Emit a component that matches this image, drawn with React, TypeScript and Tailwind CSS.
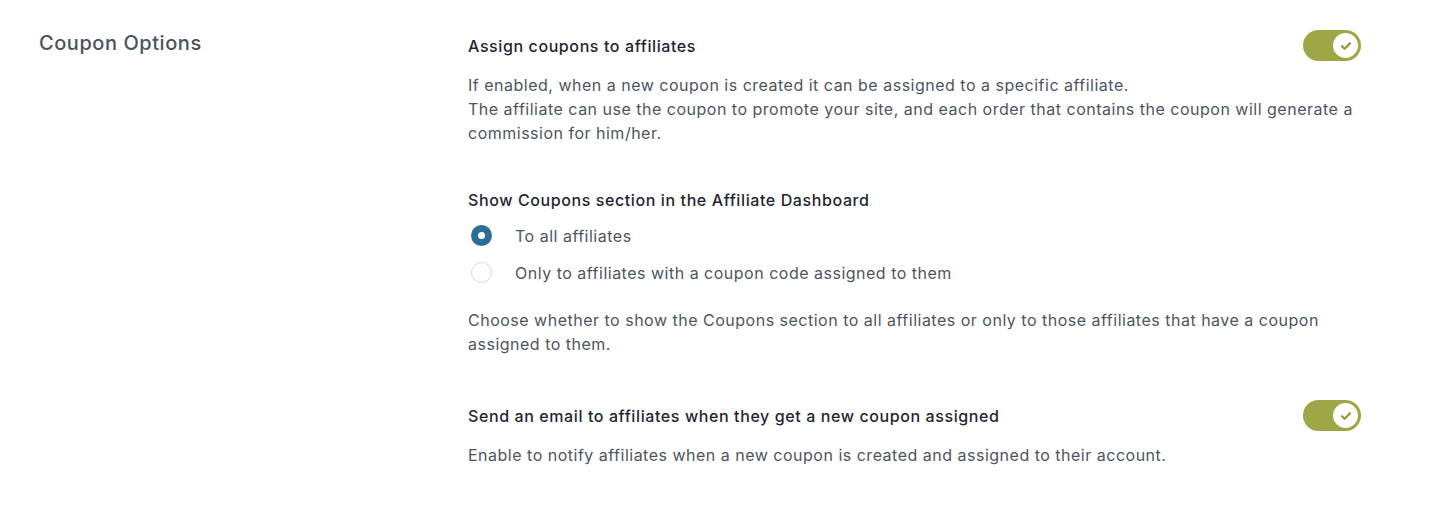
const Toggle = () => (
  <div className="flex h-[31px] w-[58px] shrink-0 items-center justify-end rounded-full bg-[#9ea646] pr-[3px]">
    <div className="flex h-[25px] w-[25px] items-center justify-center rounded-full bg-white">
      <svg width="12" height="10" viewBox="0 0 12 10" fill="none">
        <path d="M2 5.2l2.6 2.6L10 2.4" stroke="#8f9740" strokeWidth="2.2" strokeLinecap="round" strokeLinejoin="round" />
      </svg>
    </div>
  </div>
);

const Radio = ({ checked, label }: any) => (
  <div className="flex h-[37px] items-center">
    <div className="flex w-[47px] shrink-0 items-center pl-[3px]">
      {checked ? (
        <div className="flex h-[21px] w-[21px] items-center justify-center rounded-full bg-[#2e6e96]">
          <div className="h-[7px] w-[7px] rounded-full bg-white" />
        </div>
      ) : (
        <div className="h-[21px] w-[21px] rounded-full border border-[#d4d7dc] bg-white" />
      )}
    </div>
    <span className="text-[16px] tracking-[0.5px] text-[#4d5560]">{label}</span>
  </div>
);

export default function App() {
  return (
    <div className="min-h-[508px] w-[1452px] bg-white font-['Inter','Liberation_Sans',sans-serif] antialiased">
      <div className="flex pl-[39px] pt-[30px]">
        <div className="w-[429px] shrink-0">
          <h2 className="text-[20px] font-medium leading-[26px] tracking-[0.55px] text-[#4a5260]">Coupon Options</h2>
        </div>
        <div className="w-[893px]">
          <div className="flex items-center justify-between">
            <span className="text-[16px] font-medium leading-[24px] tracking-[0.6px] text-[#1f2530]">Assign coupons to affiliates</span>
            <Toggle />
          </div>
          <p className="mt-[12px] text-[16px] leading-[24px] tracking-[0.5px] text-[#4d5560]">
            If enabled, when a new coupon is created it can be assigned to a specific affiliate.
            <br />
            The affiliate can use the coupon to promote your site, and each order that contains the coupon will generate a commission for him/her.
          </p>

          <div className="mt-[43px] text-[16px] font-medium leading-[24px] tracking-[0.6px] text-[#1f2530]">
            Show Coupons section in the Affiliate Dashboard
          </div>
          <div className="mt-[5px]">
            <Radio checked label="To all affiliates" />
            <Radio label="Only to affiliates with a coupon code assigned to them" />
          </div>
          <p className="mt-[17px] pr-[30px] text-[16px] leading-[24px] tracking-[0.5px] text-[#4d5560]">
            Choose whether to show the Coupons section to all affiliates or only to those affiliates that have a coupon assigned to them.
          </p>

          <div className="mt-[44px] flex items-center justify-between">
            <span className="text-[16px] font-medium leading-[24px] tracking-[0.6px] text-[#1f2530]">
              Send an email to affiliates when they get a new coupon assigned
            </span>
            <Toggle />
          </div>
          <p className="mt-[12px] text-[16px] leading-[24px] tracking-[0.5px] text-[#4d5560]">
            Enable to notify affiliates when a new coupon is created and assigned to their account.
          </p>
        </div>
      </div>
    </div>
  );
}
